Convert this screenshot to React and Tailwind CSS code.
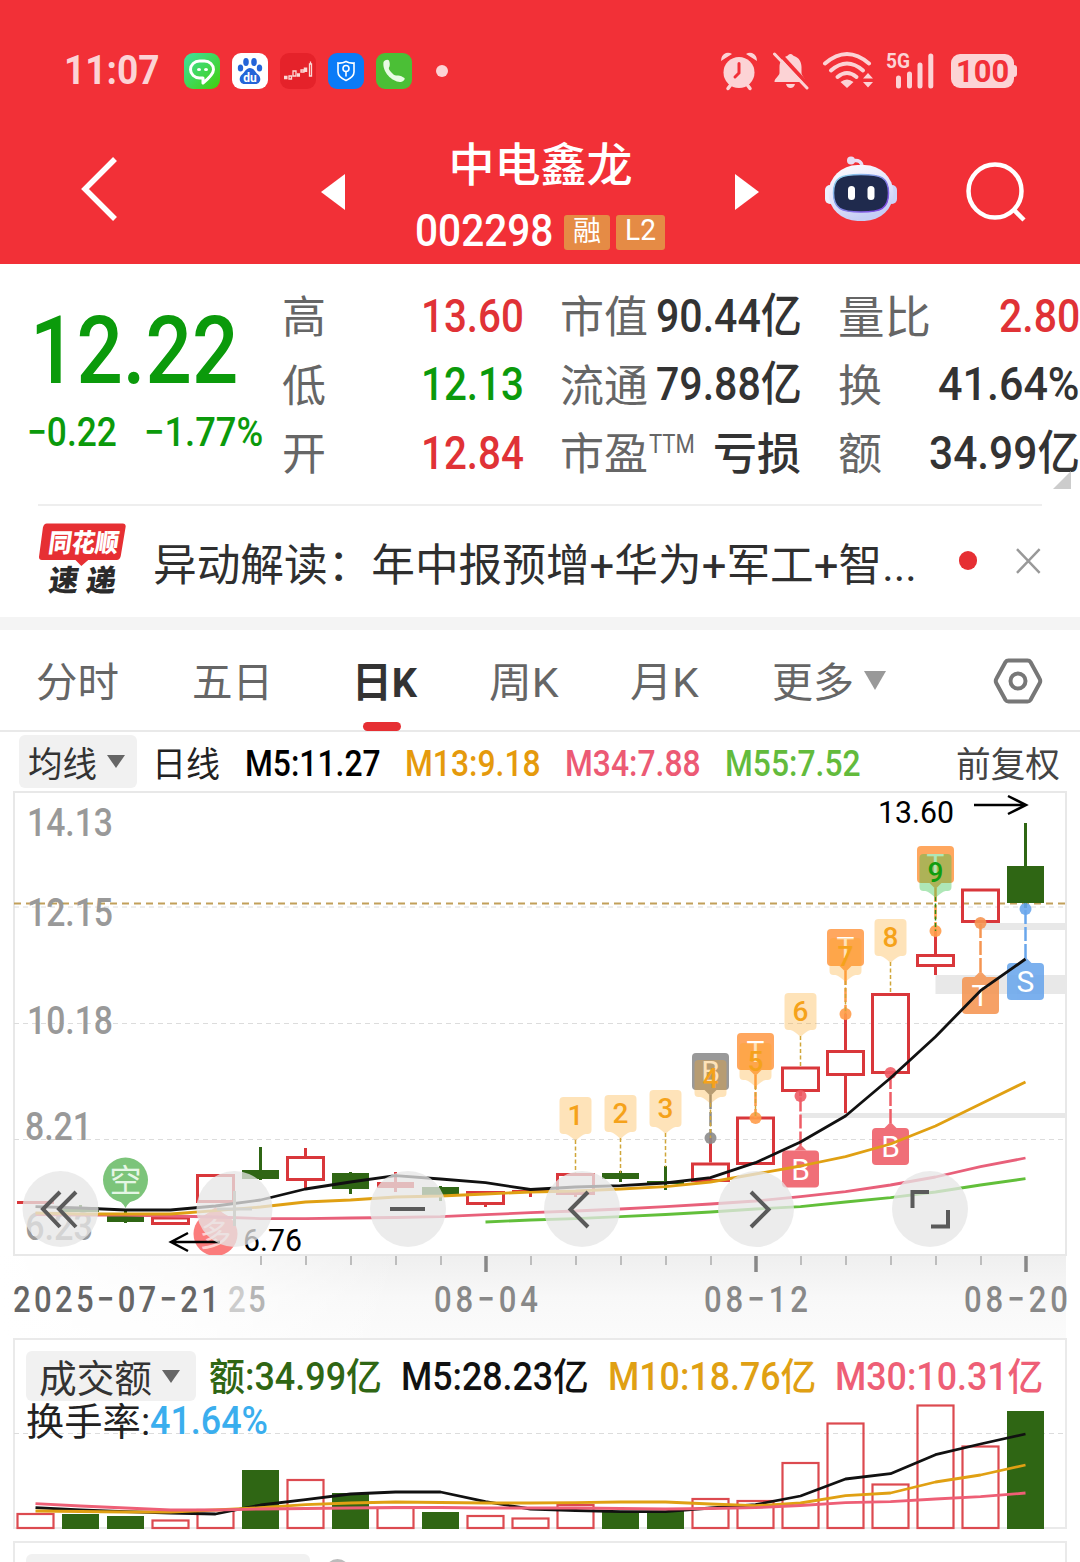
import { useLayoutEffect, useRef } from 'react';

const RED = '#d9373b';
const GREEN = '#2f6614';

// candle columns are 45px apart, the first one is centred at 35.5
const cx = (i) => 35.5 + i * 45;

// [direction, body top, body bottom, wick top, wick bottom]
const CANDLES = [
  ['up', 1201, 1204, 1201, 1204],
  ['down', 1207, 1212, 1205, 1212],
  ['down', 1216, 1222, 1211, 1223],
  ['up', 1216.5, 1225, 1216.5, 1225],
  ['up', 1174, 1203, 1174, 1203],
  ['down', 1170, 1179, 1147, 1180],
  ['up', 1156, 1181, 1148, 1188],
  ['down', 1173, 1189, 1172, 1194],
  ['up', 1182, 1188, 1172, 1192],
  ['down', 1187, 1195, 1186, 1201],
  ['up', 1191, 1205, 1191, 1207],
  ['up', 1190, 1193, 1190, 1197],
  ['up', 1173, 1195, 1173, 1197],
  ['down', 1173, 1179, 1171, 1182],
  ['down', 1181, 1184, 1166, 1190],
  ['up', 1162.5, 1182, 1138, 1182],
  ['up', 1116.5, 1165, 1116.5, 1165],
  ['up', 1066.5, 1092, 1066.5, 1096],
  ['up', 1050, 1076, 1014, 1113],
  ['up', 993, 1074, 993, 1074],
  ['up', 954, 967, 931, 975],
  ['up', 888.5, 923, 888.5, 923],
  ['down', 866, 903, 823, 908],
];

const MA5 = [1206.7, 1208, 1210, 1210, 1206, 1200, 1189, 1182, 1175.7, 1179, 1182.7, 1189.5, 1187, 1185.7, 1183, 1177.7, 1162.7, 1142, 1116, 1078, 1036.7, 990.7, 959];
const MA13 = [1213, 1214, 1214, 1214, 1210.7, 1207, 1202, 1200, 1197, 1196, 1194, 1192, 1191, 1189, 1186.7, 1182, 1174, 1166, 1156.7, 1144, 1126, 1104, 1082];
const MA34 = [1214.7, 1215, 1215, 1216, 1217, 1218.6, 1218.6, 1218, 1217.5, 1216.7, 1214.7, 1212.7, 1211, 1209, 1206.7, 1204, 1201, 1196.7, 1191.7, 1185, 1177, 1166.7, 1158];
const MA55 = [1222, 1220, 1218.6, 1216.7, 1214.5, 1212, 1209, 1206.7, 1202, 1197.7, 1192, 1185, 1178.7];

const VOLUMES = [1513, 1514, 1516, 1519.5, 1509, 1470, 1479, 1493, 1507, 1512, 1515, 1517.5, 1504, 1511, 1511, 1498, 1500, 1462, 1422.5, 1483.5, 1404.5, 1445.5, 1411];
const VOL5 = [1507.7, 1510, 1511.7, 1513, 1514, 1505, 1499.6, 1494, 1492, 1492, 1501.7, 1509, 1510.5, 1511.7, 1511.7, 1508, 1504.7, 1496, 1479, 1473.7, 1454.7, 1444, 1434];
const VOL10 = [1511, 1511.5, 1512, 1512, 1510, 1507.7, 1504.7, 1503, 1502, 1502.5, 1503, 1503, 1502.7, 1502, 1502, 1504, 1505.7, 1503, 1495.7, 1493, 1482, 1475, 1465];
const VOL30 = [1503.7, 1506, 1508, 1510, 1510, 1509, 1508.5, 1508, 1507.5, 1507.5, 1508, 1508, 1508, 1508.5, 1509, 1508.5, 1507.7, 1505.5, 1502.7, 1501.7, 1499, 1496.7, 1493];

const COUNTS = [
  { i: 12, n: 1, tip: 1140, end: 1173 },
  { i: 13, n: 2, tip: 1138, end: 1173 },
  { i: 14, n: 3, tip: 1133, end: 1167 },
  { i: 15, n: 4, tip: 1103, end: 1138 },
  { i: 16, n: 5, tip: 1086, end: 1118 },
  { i: 17, n: 6, tip: 1036, end: 1068 },
  { i: 18, n: 7, tip: 981, end: 1014 },
  { i: 19, n: 8, tip: 962, end: 993 },
  { i: 20, n: 9, tip: 897, end: 931 },
];

// trade tags: y is the top of the square, dot is where the trade sits on the candle
const TRADES = [
  { i: 15, t: 'B', y: 1053, dot: 1138, fill: '#8b8b8b' },
  { i: 16, t: 'T', y: 1033, dot: 1118, fill: '#ff9c4a' },
  { i: 18, t: 'T', y: 929, dot: 1014, fill: '#ff9c4a' },
  { i: 20, t: 'T', y: 846, dot: 931, fill: '#ff9c4a' },
  { i: 17, t: 'B', y: 1150.5, dot: 1096, fill: '#ee5c66' },
  { i: 19, t: 'B', y: 1128, dot: 1073, fill: '#ee5c66' },
  { i: 21, t: 'T', y: 977, dot: 923, fill: '#f59552' },
  { i: 22, t: 'S', y: 963, dot: 909, fill: '#69a6ec' },
];

const line = (ys, from = 0) => ys.map((y, k) => `${cx(from + k)},${y}`).join(' ');

// squeezes its text to the width of the box, quotes use a condensed face
function Fit({ className = '', children }) {
  const box = useRef(null);
  const text = useRef(null);

  useLayoutEffect(() => {
    const ratio = box.current.clientWidth / text.current.offsetWidth;
    text.current.style.transform = `scaleX(${ratio})`;
  }, [children]);

  return (
    <span ref={box} className={`block shrink-0 whitespace-nowrap leading-none ${className}`}>
      <span ref={text} className="inline-block origin-left">{children}</span>
    </span>
  );
}

function StatusBar() {
  return (
    <div className="flex h-[36px] items-center pl-[64px] text-[#fcd3d5]">
      <Fit className="w-[96px] pb-[2px] text-[41px] font-bold">11:07</Fit>
      <div className="ml-[24px] flex gap-3">
        <svg className="size-9" viewBox="0 0 36 36">
          <defs>
            <linearGradient id="line" x1="0" y1="0" x2="1" y2="1">
              <stop offset="0" stopColor="#3fe0a0" />
              <stop offset="1" stopColor="#42cf0a" />
            </linearGradient>
          </defs>
          <rect width="36" height="36" rx="9" fill="url(#line)" />
          <path d="M19 30v-5h-3.500a9 8.500 0 0 1 0-17h5a9 8.500 0 0 1 9 8.500q0 5-10.500 13.500z" fill="none" stroke="#fff" strokeWidth="3" strokeLinejoin="round" />
          <ellipse cx="15" cy="16.500" rx="2" ry="1.600" fill="#fff" />
          <ellipse cx="22" cy="16.500" rx="2" ry="1.600" fill="#fff" />
        </svg>
        <svg className="size-9" viewBox="0 0 36 36">
          <rect width="36" height="36" rx="9" fill="#fff" />
          <g fill="#2464d8">
            <ellipse cx="14" cy="9" rx="2.800" ry="4" />
            <ellipse cx="22" cy="9" rx="2.800" ry="4" />
            <ellipse cx="8.500" cy="15" rx="2.700" ry="3.600" />
            <ellipse cx="27.500" cy="15" rx="2.700" ry="3.600" />
            <path d="M18 15c4 0 5 4 8 6.500 4 3.500 2.500 9.500-2.500 9.500h-11C7.500 31 6 25 10 21.500c3-2.500 4-6.500 8-6.500z" />
          </g>
          <text x="18" y="28.500" fontSize="12" fontWeight="700" fill="#fff" textAnchor="middle">du</text>
        </svg>
        <svg className="size-9" viewBox="0 0 36 36">
          <rect width="36" height="36" rx="9" fill="#e5222a" />
          <g fill="none" stroke="#fbd9d6" strokeWidth="1.300">
            <path d="M9 23h2.500v3H9zM13 18h3v5h-3zM21 17h3v2h-3zM29.500 11h2v12h-2zM30.500 8.500v2.500" />
            <path d="M4 24.500h3.500M17 22h3M25.500 14.500v4.500" strokeWidth="3.500" />
          </g>
        </svg>
        <svg className="size-9" viewBox="0 0 36 36">
          <rect width="36" height="36" rx="9" fill="#0a7bf7" />
          <g fill="none" stroke="#fff" strokeWidth="1.600">
            <path d="M18 8.500q4 2 8 1.500v9q0 5-8 8.500-8-3.500-8-8.500v-9q4 .500 8-1.500z" />
            <circle cx="18" cy="15.500" r="3" />
            <path d="M18 18.500v5" />
          </g>
        </svg>
        <svg className="size-9" viewBox="0 0 36 36">
          <rect width="36" height="36" rx="9" fill="#4bbf36" />
          <path d="M7.500 9c1.500-2.500 4.500-3 5.500-1.500.8 2 1 4 .5 6-1.300 1.500-.8 3 1.500 5.500 2.500 2.700 4 4 6 3.500 2.500-.5 5.500 1 7.500 2.500.8 1.500-1.500 4-4.500 4C16 28.500 6 19 7.500 9z" fill="#e8fbe4" />
        </svg>
      </div>
      <span className="ml-6 size-3 rounded-full bg-[#fcd3d5]" />

      <svg className="ml-[272px] h-[40px] w-[38px]" viewBox="0 0 38 40">
        <circle cx="19" cy="21.500" r="15.500" fill="currentColor" />
        <path d="M8 37.500l3-4M30 37.500l-3-4" stroke="currentColor" strokeWidth="3.500" strokeLinecap="round" />
        <path d="M1 10q0-6 5-8 3-1 6 1zM37 10q0-6-5-8-3-1-6 1z" fill="currentColor" />
        <path d="M19 12.500v9.500l-4 4" stroke="#f23037" strokeWidth="3" fill="none" strokeLinecap="round" />
      </svg>
      <svg className="ml-[14px] h-[38px] w-[37px]" viewBox="0 0 37 38">
        <path d="M18.500 2c2 0 2 1.500 3.500 2 5 1.500 7.500 6 7.500 11v6c0 3 4 5 4 9H2.500c0-4 5-6 5-9v-6c0-5 2.500-9.500 7.500-11 1.500-.500 1.500-2 3.500-2zM14 32h9q-1 4-4.500 4T14 32z" fill="currentColor" />
        <path d="M6 0l31 34" stroke="#f23037" strokeWidth="4" />
        <path d="M2.500 2l32.500 34" stroke="currentColor" strokeWidth="3" strokeLinecap="round" />
      </svg>
      <svg className="mb-[2px] ml-[13px] h-[38px] w-[52px]" viewBox="0 0 52 38">
        <g fill="none" stroke="currentColor" strokeWidth="4" strokeLinecap="round">
          <path d="M3 12.500q22-19 44 0" />
          <path d="M9 19.500q16-14 32 0" />
          <path d="M15.500 26q9.500-8 19 0" />
        </g>
        <path d="M18.500 31q6.500-5 13 0L25 37zM41 27.500l5-5.500 5 5.500zM41 31l5 5.500 5-5.500z" fill="currentColor" />
      </svg>
      <svg className="ml-[11px] h-[40px] w-[51px]" viewBox="0 0 51 40">
        <text x="1" y="17" fontSize="21" fontWeight="700" textLength="24" lengthAdjust="spacingAndGlyphs" fill="currentColor">5G</text>
        <path d="M13.500 27v8M24.500 23v12M35 14v21M45.800 5v30" stroke="currentColor" strokeWidth="5" strokeLinecap="round" />
      </svg>
      <div className="ml-[15px] flex h-[34px] w-[63px] items-center justify-center rounded-[9px] bg-[#fcd3d5] text-[#f23037]">
        <Fit className="w-[53px] text-[32px] font-bold">100</Fit>
      </div>
      <span className="h-3 w-[3px] rounded-r bg-[#fcd3d5]" />
    </div>
  );
}

function Robot() {
  return (
    <svg className="mt-[17px] ml-[66px] h-[68px] w-[72px]" viewBox="0 0 72 68">
      <defs>
        <linearGradient id="shell" x1="0" y1="0" x2=".4" y2="1">
          <stop offset="0" stopColor="#fff" />
          <stop offset=".6" stopColor="#e3e3fb" />
          <stop offset="1" stopColor="#c5cdf5" />
        </linearGradient>
        <linearGradient id="rim" x1="0" y1="0" x2="1" y2="1">
          <stop offset="0" stopColor="#8fe0ee" />
          <stop offset="1" stopColor="#7a35e0" />
        </linearGradient>
      </defs>
      <path d="M27 6q10-2 10 6" fill="none" stroke="#eadff5" strokeWidth="3.500" />
      <circle cx="26" cy="5.500" r="4" fill="#e9dcf2" />
      <rect x="0" y="30" width="10" height="19" rx="5" fill="#eef0fd" />
      <rect x="62" y="30" width="10" height="19" rx="5" fill="#cdd3f8" />
      <rect x="3.500" y="10" width="65" height="56" rx="29" fill="url(#shell)" />
      <path d="M36 19.500c20 0 27.500 3 27.500 18.500S56 57 36 57 8.500 53.500 8.500 38 16 19.500 36 19.500z" fill="#1f2a4d" stroke="url(#rim)" strokeWidth="1.500" />
      <rect x="23" y="31" width="7" height="14" rx="3.500" fill="#fff" />
      <rect x="42.500" y="31" width="7" height="14" rx="3.500" fill="#fff" />
    </svg>
  );
}

function Header() {
  return (
    <header className="h-[264px] bg-[#f23037] pt-[53px] text-white">
      <StatusBar />
      <div className="mt-[49px] flex h-[126px] items-start pl-[80px]">
        <svg className="mt-[19px] h-[64px] w-[38px]" viewBox="0 0 38 64">
          <path d="M35 2L5 32l30 30" fill="none" stroke="#fff" strokeWidth="5.500" />
        </svg>
        <svg className="mt-[36px] ml-[203px] h-[36px] w-[24px]" viewBox="0 0 24 36">
          <path d="M24 0v36L0 18z" fill="#fff" />
        </svg>
        <div className="ml-[70px] flex w-[251px] flex-col items-center">
          <h1 className="text-[46px] leading-[54px] font-medium">中电鑫龙</h1>
          <div className="mt-[16px] flex w-full items-center">
            <Fit className="w-[138px] pb-[4px] text-[45px] font-medium">002298</Fit>
            <span className="ml-[11px] flex h-[35px] w-[46px] items-center justify-center rounded-[3px] bg-[#e58b45] pb-px text-[28px] leading-none">融</span>
            <span className="ml-[6px] flex h-[35px] w-[49px] items-center justify-center rounded-[3px] bg-[#e58b45] pb-[4px] text-[29px] leading-none">
              <Fit className="w-[31px]">L2</Fit>
            </span>
          </div>
        </div>
        <svg className="mt-[36px] ml-[69px] h-[36px] w-[24px]" viewBox="0 0 24 36">
          <path d="M0 0v36l24-18z" fill="#fff" />
        </svg>
        <Robot />
        <svg className="mt-[23px] ml-[68px] h-[62px] w-[62px]" viewBox="0 0 62 62">
          <circle cx="30" cy="30" r="26.500" fill="none" stroke="#fff" strokeWidth="4.500" />
          <path d="M48.500 48.500l10.500 10.500" stroke="#fff" strokeWidth="4.500" />
        </svg>
      </div>
    </header>
  );
}

function Label({ children }) {
  return <span className="shrink-0 pt-[6px] text-[44px] leading-none text-[#666]">{children}</span>;
}

function Quote() {
  const row = 'flex h-[68.5px] items-center';
  const num = 'text-[47px] font-medium';
  return (
    <section className="relative flex h-[240px] pt-[17px] text-[#333]">
      <div className="w-[282px] pl-[27px] text-[#0b9a0b]">
        <Fit className="mt-[22px] ml-[3px] w-[208px] text-[95px] font-medium">12.22</Fit>
        <div className="mt-[15px] flex">
          <Fit className="w-[90px] text-[40px] font-medium">−0.22</Fit>
          <Fit className="ml-[27px] w-[119px] text-[40px] font-medium">−1.77%</Fit>
        </div>
      </div>
      <div className="w-[278px]">
        <div className={row}><Label>高</Label><Fit className={`${num} ml-[95px] w-[103px] text-[#e03236]`}>13.60</Fit></div>
        <div className={row}><Label>低</Label><Fit className={`${num} ml-[95px] w-[103px] text-[#0b9a0b]`}>12.13</Fit></div>
        <div className={row}><Label>开</Label><Fit className={`${num} ml-[95px] w-[103px] text-[#e03236]`}>12.84</Fit></div>
      </div>
      <div className="w-[278px]">
        <div className={row}><Label>市值</Label><Fit className={`${num} ml-[8px] w-[146px]`}>90.44亿</Fit></div>
        <div className={row}><Label>流通</Label><Fit className={`${num} ml-[8px] w-[146px]`}>79.88亿</Fit></div>
        <div className={row}>
          <Label>市盈</Label>
          <Fit className="mb-[15px] ml-[1px] w-[46px] text-[25px] text-[#666]">TTM</Fit>
          <span className="ml-[18px] pt-[6px] text-[44px] leading-none font-medium">亏损</span>
        </div>
      </div>
      <div className="w-[242px]">
        <div className={`${row} justify-between`}>
          <Fit className="w-[93px] pt-[6px] text-[45px] text-[#666]">量比</Fit>
          <Fit className={`${num} w-[81px] text-[#e03236]`}>2.80</Fit>
        </div>
        <div className={`${row} justify-between`}><Label>换</Label><Fit className={`${num} w-[142px]`}>41.64%</Fit></div>
        <div className={`${row} justify-between`}><Label>额</Label><Fit className={`${num} w-[151px]`}>34.99亿</Fit></div>
      </div>
      <svg className="absolute top-[207px] left-[1053px] size-[18px]" viewBox="0 0 18 18">
        <path d="M18 0v18H0z" fill="#ccc" />
      </svg>
    </section>
  );
}

function News() {
  return (
    <section className="mx-[38px] flex h-[113px] items-center border-t-2 border-[#eee]">
      <svg className="mb-[6px] h-[76px] w-[90px]" viewBox="0 0 90 76">
        <path d="M9 2h77q3 0 3 3l-5 30q-1 4-4 4H51l-7 6-6-6H4q-3 0-3-3L5 6q1-4 4-4z" fill="#e62f33" />
        <g fontWeight="900" transform="skewX(-8)">
          <text x="14" y="31" fontSize="26" textLength="71" lengthAdjust="spacingAndGlyphs" fill="#fff">同花顺</text>
          <text x="20" y="71" fontSize="30" textLength="68" lengthAdjust="spacing" fill="#2b2b2b">速递</text>
        </g>
      </svg>
      <Fit className="ml-[26px] w-[764px] pt-[8px] text-[44px] text-[#2f2f2f]">异动解读：年中报预增+华为+军工+智...</Fit>
      <span className="mb-[2px] ml-[42px] size-[19px] rounded-full bg-[#e62f33]" />
      <svg className="mb-[2px] ml-[38px] h-[26px] w-[27px]" viewBox="0 0 27 26">
        <path d="M2 1l23 24M25 1L2 25" stroke="#999" strokeWidth="2.500" />
      </svg>
    </section>
  );
}

function Tabs() {
  return (
    <nav className="flex h-[102px] items-start border-b-2 border-[#e9e9e9] pt-[33px] pl-[36px] text-[41px] text-[#666]">
      <Fit className="w-[83px]">分时</Fit>
      <Fit className="ml-[73px] w-[81px]">五日</Fit>
      <div className="ml-[79px] flex w-[65px] flex-col items-center">
        <Fit className="w-[65px] font-bold text-[#333]">日K</Fit>
        <span className="mt-[18px] mr-[6px] h-[9px] w-[38px] rounded-full bg-[#e62f33]" />
      </div>
      <Fit className="ml-[72px] w-[70px]">周K</Fit>
      <Fit className="ml-[71px] w-[69px]">月K</Fit>
      <Fit className="ml-[73px] w-[82px]">更多</Fit>
      <svg className="mt-[8px] ml-[10px] h-[19px] w-[22px]" viewBox="0 0 22 19">
        <path d="M0 0h22L11 19z" fill="#999" />
      </svg>
      <svg className="-mt-[5px] ml-[107px] h-[46px] w-[50px]" viewBox="0 0 50 46">
        <path d="M15.500 2.500h19q2 0 3 1.500l9 16.500q1.500 2.500 0 5l-9 16.500q-1 1.500-3 1.500h-19q-2 0-3-1.500l-9-16.500q-1.500-2.500 0-5l9-16.500q1-1.500 3-1.500z" fill="none" stroke="#777" strokeWidth="4" />
        <circle cx="25" cy="23" r="7.500" fill="none" stroke="#777" strokeWidth="4" />
      </svg>
    </nav>
  );
}

function Picker({ className, children }) {
  return (
    <div className={`flex shrink-0 items-center rounded-[6px] bg-[#f1f1f1] text-[#333] ${className}`}>
      {children}
      <svg className="ml-[10px] h-[13px] w-[18px]" viewBox="0 0 18 13">
        <path d="M0 0h18L9 13z" fill="#666" />
      </svg>
    </div>
  );
}

function Legend() {
  const item = 'pt-[4px] text-[37px] font-medium';
  return (
    <div className="flex h-[59px] items-center pl-[19px]">
      <Picker className="h-[53px] w-[118px] pl-[9px]"><Fit className="w-[69px] pt-[7px] text-[35px]">均线</Fit></Picker>
      <Fit className="ml-[15px] w-[68px] pt-[7px] text-[35px] text-[#222]">日线</Fit>
      <Fit className={`${item} ml-[25px] w-[136px] text-black`}>M5:11.27</Fit>
      <Fit className={`${item} ml-[24px] w-[136px] text-[#e59a0c]`}>M13:9.18</Fit>
      <Fit className={`${item} ml-[24px] w-[136px] text-[#ec5a74]`}>M34:7.88</Fit>
      <Fit className={`${item} ml-[24px] w-[136px] text-[#63bb3c]`}>M55:7.52</Fit>
      <Fit className="ml-[95px] w-[104px] pt-[7px] text-[35px] text-[#444]">前复权</Fit>
    </div>
  );
}

function Candle({ i, c }) {
  const [dir, top, bottom, high, low] = c;
  const x = cx(i);
  if (dir === 'down') {
    return (
      <g fill={GREEN}>
        <rect x={x - 1.5} y={high} width="3" height={low - high} />
        <rect x={x - 18.5} y={top} width="37" height={bottom - top} />
      </g>
    );
  }
  return (
    <g stroke={RED} strokeWidth="3" fill="none">
      <path d={`M${x} ${high}V${top}M${x} ${bottom}V${low}`} />
      {bottom - top < 7
        ? <rect x={x - 18.5} y={top} width="37" height={bottom - top} fill={RED} stroke="none" />
        : <rect x={x - 18} y={top + 1.5} width="36" height={bottom - top - 3} />}
    </g>
  );
}

function Trade({ i, t, y, dot, fill }) {
  const x = cx(i);
  const above = y < dot;
  const tip = above ? `M${x - 6} ${y + 37}l6 6 6-6z` : `M${x - 6} ${y}l6-6 6 6z`;
  return (
    <g>
      <path d={`M${x} ${above ? y + 42 : y - 5}V${dot}`} stroke={fill} strokeWidth="2.500" strokeDasharray="14 3" />
      <circle cx={x} cy={dot} r="6" fill={fill} opacity=".9" />
      <g opacity=".88">
        <rect x={x - 18.5} y={y} width="37" height="37" rx="4" fill={fill} />
        <path d={tip} fill={fill} />
      </g>
      <text x={x} y={y + 29} fontSize="30" textAnchor="middle" fill="#fff">{t}</text>
    </g>
  );
}

function Count({ i, n, tip, end }) {
  const x = cx(i);
  const color = n === 9 ? '#0f9d0f' : '#f5a21b';
  return (
    <g>
      <path d={`M${x} ${tip}V${end}`} stroke={n === 9 ? '#2f8a14' : '#d0a63a'} strokeWidth="1.500" strokeDasharray="4 2.500" />
      <path
        d={`M${x - 12} ${tip - 43}h24q4 0 4 4v29q0 4-4 4h-2q-4 1-10 7-6-6-10-7h-2q-4 0-4-4v-29q0-4 4-4z`}
        fill={n === 9 ? '#35c24a' : '#fda51c'}
        opacity={n === 9 ? 0.4 : 0.31}
      />
      <text x={x} y={tip - 15} fontSize="28" fontWeight="500" textAnchor="middle" fill={color}>{n}</text>
    </g>
  );
}

function RoundButtons() {
  return (
    <g>
      {[60.5, 234.5, 408, 582, 756, 930].map((x) => (
        <circle key={x} cx={x} cy="1209" r="38" fill="#e6e6e6" opacity=".76" />
      ))}
      <g fill="none" stroke="#5a5a5a" strokeWidth="4">
        <path d="M60 1192l-17 17 17 18M76 1192l-17 17 17 18" />
        <path d="M390 1209h35" />
        <path d="M588 1192l-17.500 17.500 17.500 17.500" />
        <path d="M751 1192l17.500 17.500-17.500 17.500" />
        <path d="M929 1192h-16.500v16M948 1210v16.500h-17" />
        <path d="M217 1209h35M234.500 1191v35" stroke="#d3d3cf" strokeWidth="3" />
      </g>
    </g>
  );
}

function Price({ x, y, w, children }) {
  return (
    <text x={x} y={y} fontSize="38" fontWeight="500" textLength={w} lengthAdjust="spacingAndGlyphs" fill="#999">{children}</text>
  );
}

// axis labels: narrow glyphs, widely spaced
function Day({ x, w, fill = '#888', children }) {
  return (
    <text transform={`translate(${x} 1312) scale(.84 1)`} fontSize="37" fontWeight="500" textLength={w / 0.84} fill={fill}>{children}</text>
  );
}

function KChart() {
  return (
    <svg className="block h-[547px] w-full" viewBox="0 791 1080 547">
      <defs>
        <linearGradient id="axis" x1="0" y1="0" x2="0" y2="1">
          <stop offset="0" stopColor="#efefef" />
          <stop offset=".5" stopColor="#f8f8f8" />
          <stop offset="1" stopColor="#fbfbfb" />
        </linearGradient>
        <linearGradient id="fade">
          <stop offset="0" stopColor="#fff" />
          <stop offset=".45" stopColor="#fff" stopOpacity=".75" />
          <stop offset="1" stopColor="#fff" stopOpacity="0" />
        </linearGradient>
        <clipPath id="plot"><rect x="14" y="792" width="1052" height="463" /></clipPath>
      </defs>
      <rect x="0" y="1256" width="1066" height="82" fill="url(#axis)" />
      <rect x="0" y="1256" width="400" height="82" fill="url(#fade)" />
      <rect x="14" y="792" width="1052" height="463" fill="#fff" stroke="#e8e8e8" strokeWidth="2" />
      <g stroke="#dcdcdc" strokeWidth="1" strokeDasharray="5 4">
        <path d="M14 907h1052M14 1023.500h1052M14 1139.500h1052" />
      </g>
      <g fill="#e8e8e8">
        <rect x="980" y="923" width="86" height="7" />
        <rect x="935.500" y="975" width="130.500" height="19" />
        <rect x="800" y="1113" width="266" height="5" />
      </g>
      <path d="M14 903.500h1052" stroke="#c2a05a" strokeWidth="1.800" strokeDasharray="7 5" />

      <Price x="27" y="836" w="86">14.13</Price>
      <Price x="27" y="926" w="86">12.15</Price>
      <Price x="27" y="1034" w="86">10.18</Price>
      <Price x="25" y="1140" w="67">8.21</Price>
      <Price x="25" y="1240" w="68">6.23</Price>

      <g clipPath="url(#plot)">
        <circle cx="215.500" cy="1234" r="22" fill="#fb7c7c" />
        <path d="M203 1217l12.500-10 12.500 10z" fill="#fb7c7c" />
        <text x="215.500" y="1246" fontSize="32" textAnchor="middle" fill="#ffd0d0">多</text>
      </g>
      <circle cx="125.500" cy="1180" r="22.500" fill="#7cc47a" />
      <path d="M114 1198q8 3 11.500 10 3.500-7 11.500-10z" fill="#7cc47a" />
      <text x="125.500" y="1192" fontSize="32" textAnchor="middle" fill="#e5f6e5">空</text>

      {CANDLES.map((c, i) => <Candle key={i} i={i} c={c} />)}
      {TRADES.map((t) => <Trade key={t.i} {...t} />)}
      {COUNTS.map((c) => <Count key={c.i} {...c} />)}

      <g fill="none" strokeWidth="2.800" strokeLinejoin="round">
        <polyline points={line(MA55, 10)} stroke="#62bf3a" />
        <polyline points={line(MA34)} stroke="#e8607a" />
        <polyline points={line(MA13)} stroke="#e0a013" />
        <polyline points={line(MA5)} stroke="#111" />
      </g>

      <g stroke="#000" strokeWidth="2.500" fill="none">
        <path d="M974 805h52M1008 796l18 9-18 9" />
        <path d="M220 1242h-49M188 1233l-17 9 17 9" />
      </g>
      <text x="878" y="823" fontSize="31" textLength="76" lengthAdjust="spacingAndGlyphs">13.60</text>
      <text x="243" y="1251" fontSize="31" textLength="59" lengthAdjust="spacingAndGlyphs">6.76</text>

      <RoundButtons />

      {CANDLES.map((c, i) => {
        if (i < 5) return null;
        return (i - 10) % 6 === 0
          ? <path key={i} d={`M${cx(i) + 0.5} 1256v16`} stroke="#888" strokeWidth="3.500" />
          : <path key={i} d={`M${cx(i) + 0.5} 1256v9`} stroke="#bdbdbd" strokeWidth="2" />;
      })}
      <Day x="434" w={104}>08−04</Day>
      <Day x="704" w={104}>08−12</Day>
      <Day x="964" w={104}>08−20</Day>
      <Day x="13" w={206} fill="#666">2025−07−21</Day>
      <Day x="228" w={18} fill="#ccc">2</Day>
      <Day x="248" w={18} fill="#b5b5b5">5</Day>
    </svg>
  );
}

function Turnover() {
  const item = 'pt-[2px] text-[38px] font-medium';
  return (
    <section className="relative mr-[13px] ml-[13px] h-[191px] border-2 border-[#eaeaea] bg-white">
      <svg className="absolute -top-[2px] -left-[15px] h-[193px] w-[1080px]" viewBox="0 1338 1080 193">
        <path d="M14 1433.500h1052" stroke="#dcdcdc" strokeDasharray="5 4" />
        {VOLUMES.map((top, i) => (
          CANDLES[i][0] === 'down'
            ? <rect key={i} x={cx(i) - 18.5} y={top} width="37" height={1529 - top} fill={GREEN} />
            : <rect key={i} x={cx(i) - 18} y={top + 1} width="36" height={1527 - top} fill="none" stroke="#dc4a50" strokeWidth="2.200" />
        ))}
        <g fill="none" strokeWidth="2.800" strokeLinejoin="round">
          <polyline points={line(VOL5)} stroke="#111" />
          <polyline points={line(VOL10)} stroke="#e0a013" />
          <polyline points={line(VOL30)} stroke="#ee5f76" />
        </g>
      </svg>
      <div className="relative flex items-center pt-[11px] pl-[11px]">
        <Picker className="h-[50px] w-[170px] pl-[13px]"><Fit className="w-[113px] pt-[6px] text-[38px]">成交额</Fit></Picker>
        <Fit className={`${item} ml-[13px] w-[173px] text-[#2f6614]`}>额:34.99亿</Fit>
        <Fit className={`${item} ml-[19px] w-[188px] text-[#111]`}>M5:28.23亿</Fit>
        <Fit className={`${item} ml-[19px] w-[208px] text-[#e0a013]`}>M10:18.76亿</Fit>
        <Fit className={`${item} ml-[19px] w-[208px] text-[#ee5f76]`}>M30:10.31亿</Fit>
      </div>
      <div className="relative flex items-center pl-[11px]">
        <Fit className="w-[124px] pt-[2px] text-[38px] text-[#222]">换手率:</Fit>
        <Fit className="w-[118px] text-[38px] font-medium text-[#3aaeee]">41.64%</Fit>
      </div>
    </section>
  );
}

export default function App() {
  return (
    <main className="h-[1562px] w-[1080px] overflow-hidden bg-white font-[Roboto,'Noto_Sans_CJK_SC',sans-serif]">
      <Header />
      <Quote />
      <News />
      <div className="h-[13px] bg-[#f4f4f4]" />
      <Tabs />
      <Legend />
      <KChart />
      <Turnover />
      <section className="mx-[13px] mt-[12px] h-[40px] border-2 border-[#eaeaea]">
        <div className="flex gap-[15px] pt-[11px] pl-[11px]">
          <span className="h-[30px] w-[284px] rounded-[6px] bg-[#f1f1f1]" />
          <span className="mt-[5px] size-[25px] rounded-full border-[3px] border-[#bbb]" />
        </div>
      </section>
    </main>
  );
}
